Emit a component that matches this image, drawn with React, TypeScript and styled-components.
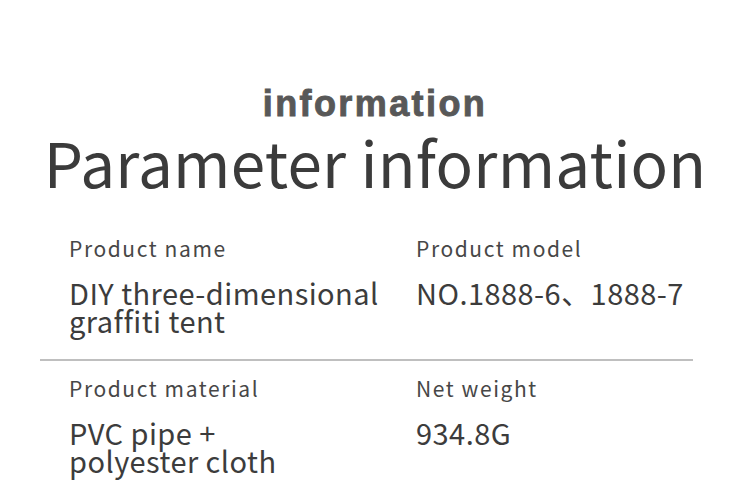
import styled, { createGlobalStyle } from 'styled-components';

const GlobalStyle = createGlobalStyle`
  body {
    margin: 0;
    background: #ffffff;
  }
`;

const params = [
  {
    left: { label: 'Product name', value: 'DIY three-dimensional\ngraffiti tent' },
    right: { label: 'Product model', value: 'NO.1888-6、1888-7' },
  },
  {
    left: { label: 'Product material', value: 'PVC pipe +\npolyester cloth' },
    right: { label: 'Net weight', value: '934.8G' },
  },
];

const App = () => {
  return (
    <Page>
      <GlobalStyle />
      <SubTitle>information</SubTitle>
      <Title>Parameter information</Title>
      <Table>
        {params.map((row, i) => (
          <Row key={i} $divider={i < params.length - 1}>
            <Cell>
              <Label>{row.left.label}</Label>
              <Value>{row.left.value}</Value>
            </Cell>
            <Cell>
              <Label>{row.right.label}</Label>
              <Value>{row.right.value}</Value>
            </Cell>
          </Row>
        ))}
      </Table>
    </Page>
  );
};

const Page = styled.div`
  width: 750px;
  height: 504px;
  overflow: hidden;
  padding-top: 84px;
  box-sizing: border-box;
  font-family: 'Noto Sans CJK SC', 'Noto Sans', sans-serif;
`;

const SubTitle = styled.div`
  font-family: 'Liberation Sans', Arial, sans-serif;
  font-weight: bold;
  font-size: 36px;
  line-height: 40px;
  letter-spacing: 2.4px;
  color: #585858;
  -webkit-text-stroke: 0.9px #585858;
  text-align: center;
`;

const Title = styled.div`
  margin-top: 6px;
  font-size: 62px;
  line-height: 62px;
  letter-spacing: 0.25px;
  color: #3b3b3b;
  text-align: center;
`;

const Table = styled.div`
  margin: 29px 57px 0 40px;
`;

const Row = styled.div<{ $divider: boolean }>`
  display: grid;
  grid-template-columns: 347px 1fr;
  padding: 13px 0 ${(p) => (p.$divider ? '25px' : '0')} 29px;
  border-bottom: ${(p) => (p.$divider ? '2px solid #bfbfbf' : 'none')};
`;

const Cell = styled.div`
  display: flex;
  flex-direction: column;
`;

const Label = styled.div`
  font-size: 21px;
  line-height: 28px;
  letter-spacing: 1.6px;
  color: #474747;
  margin-bottom: 16px;
`;

const Value = styled.div`
  font-size: 29px;
  line-height: 28px;
  letter-spacing: 0.45px;
  color: #3c3c3c;
  white-space: pre-line;
`;

export default App;
